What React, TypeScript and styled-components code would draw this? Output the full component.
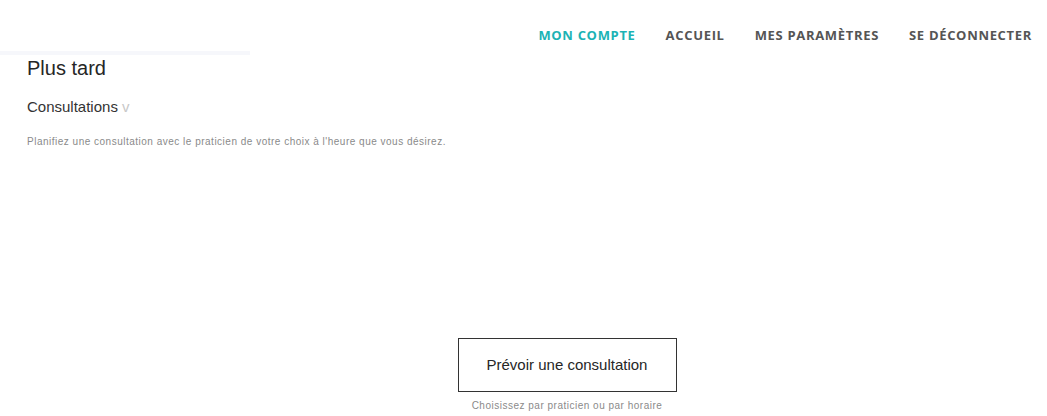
import React from "react";
import styled, { createGlobalStyle } from "styled-components";

const Global = createGlobalStyle`
  html, body { margin: 0; padding: 0; background: #fff; }
  body { font-family: "Liberation Sans", Arial, sans-serif; color: #222; }
`;

const Page = styled.div`
  width: 1047px;
  height: 416px;
  overflow: hidden;
  display: flex;
  flex-direction: column;
`;

const Header = styled.header`
  display: flex;
  justify-content: flex-end;
  align-items: flex-start;
  height: 51px;
  padding: 26px 15px 0 0;
  box-sizing: border-box;
`;

const Nav = styled.nav`
  display: flex;
  gap: 30px;
`;

const NavLink = styled.a<{ $active?: boolean }>`
  font-family: "Open Sans", sans-serif;
  font-weight: 700;
  font-size: 13px;
  letter-spacing: 0.68px;
  text-transform: uppercase;
  text-decoration: none;
  color: ${(p) => (p.$active ? "#1cb3b5" : "#555")};
  line-height: 18px;
`;

const FadeBar = styled.div`
  width: 250px;
  height: 4px;
  background: #f6f7fb;
`;

const Content = styled.main`
  display: flex;
  flex-direction: column;
  padding: 0 0 0 27px;
`;

const Title = styled.h1`
  margin: 2px 0 0;
  font-size: 20px;
  font-weight: 400;
  line-height: 23px;
  color: #262626;
`;

const Sub = styled.h2`
  margin: 18px 0 0;
  font-size: 15px;
  font-weight: 400;
  line-height: 18px;
  color: #333;
`;

const Faded = styled.span`
  color: #c8c8c8;
`;

const Lead = styled.p`
  margin: 19px 0 0;
  font-size: 10px;
  letter-spacing: 0.5px;
  line-height: 13px;
  color: #8a8a8a;
`;

const Action = styled.div`
  margin-top: 190px;
  display: flex;
  flex-direction: column;
  align-items: center;
  width: 1080px;
`;

const Button = styled.button`
  width: 219px;
  height: 54px;
  border: 1px solid #333;
  background: #fff;
  font-family: "Liberation Sans", Arial, sans-serif;
  font-size: 15px;
  color: #262626;
  padding: 0 0 2px;
  cursor: pointer;
`;

const Caption = styled.span`
  margin-top: 7px;
  font-size: 10px;
  letter-spacing: 0.5px;
  line-height: 13px;
  color: #8a8a8a;
`;

export default function App() {
  return (
    <Page>
      <Global />
      <Header>
        <Nav>
          <NavLink $active href="#">Mon compte</NavLink>
          <NavLink href="#">Accueil</NavLink>
          <NavLink href="#">Mes paramètres</NavLink>
          <NavLink href="#">Se déconnecter</NavLink>
        </Nav>
      </Header>
      <FadeBar />
      <Content>
        <Title>Plus tard</Title>
        <Sub>
          Consultations <Faded>v</Faded>
        </Sub>
        <Lead>
          Planifiez une consultation avec le praticien de votre choix à l'heure que vous désirez.
        </Lead>
        <Action>
          <Button>Prévoir une consultation</Button>
          <Caption>Choisissez par praticien ou par horaire</Caption>
        </Action>
      </Content>
    </Page>
  );
}
